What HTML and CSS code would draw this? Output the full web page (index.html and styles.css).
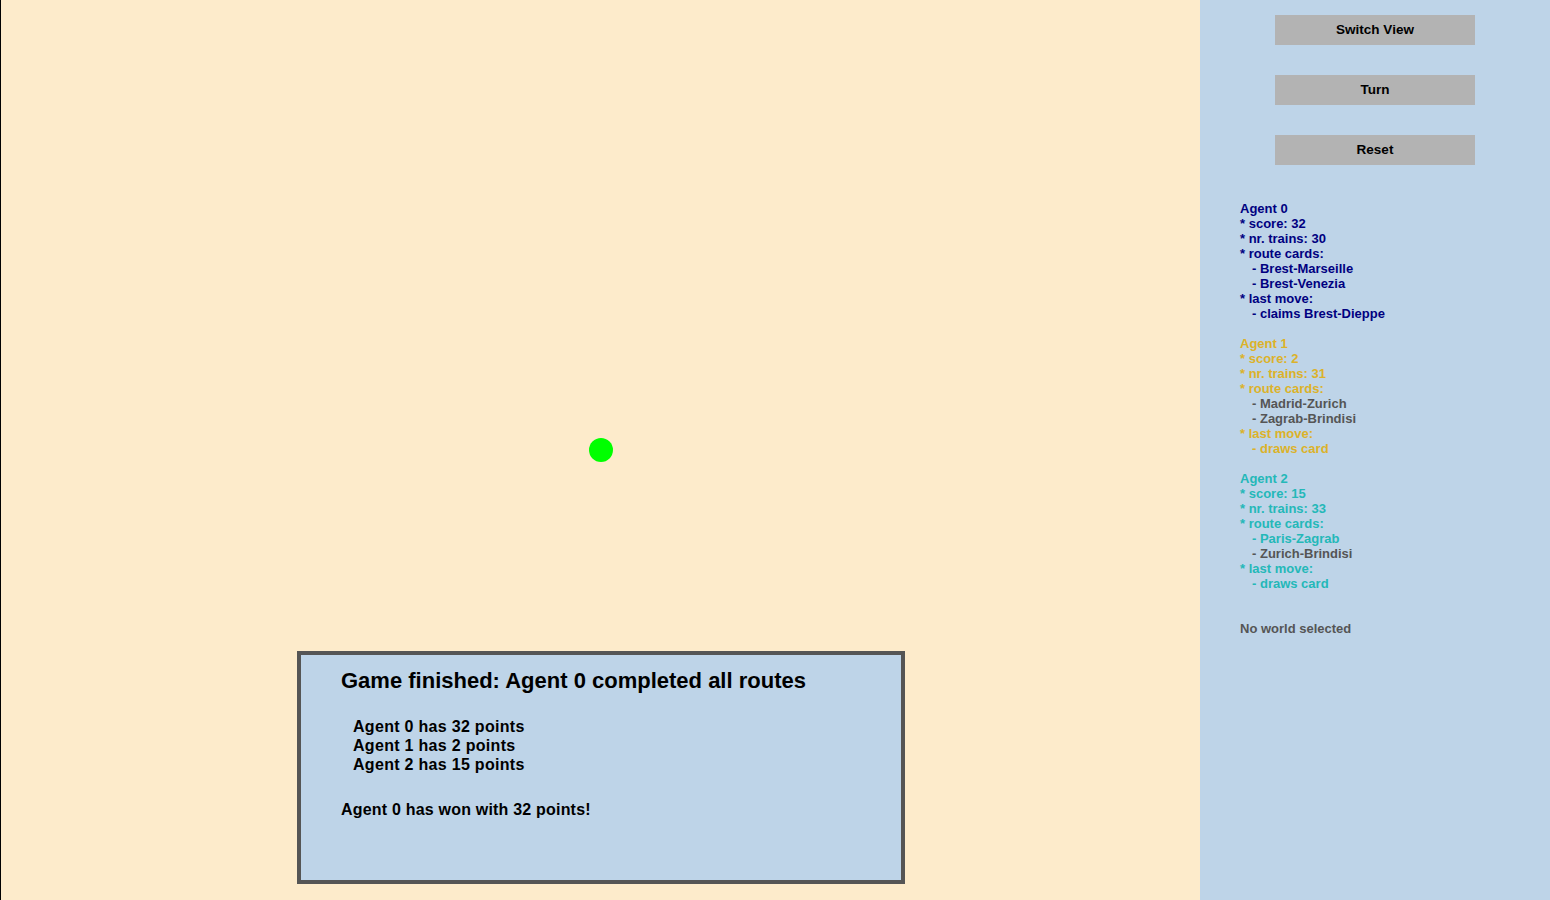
FILE: index.html
```html
<!DOCTYPE html>
<html>
<head>
<meta charset="utf-8">
<link rel="stylesheet" href="styles.css">
</head>
<body>
<div class="app">
  <div class="board">
    <div class="dot"></div>
    <div class="dialog">
      <div class="title">Game finished: Agent 0 completed all routes</div>
      <div class="scores">
        <div>Agent 0 has 32 points</div>
        <div>Agent 1 has 2 points</div>
        <div>Agent 2 has 15 points</div>
      </div>
      <div class="winner">Agent 0 has won with 32 points!</div>
    </div>
  </div>
  <div class="sidebar">
    <div class="buttons">
      <button class="btn">Switch View</button>
      <button class="btn">Turn</button>
      <button class="btn">Reset</button>
    </div>
    <div class="info">
      <div class="agent a0">
        <div>Agent 0</div>
        <div>* score: 32</div>
        <div>* nr. trains: 30</div>
        <div>* route cards:</div>
        <div class="sub">- Brest-Marseille</div>
        <div class="sub">- Brest-Venezia</div>
        <div>* last move:</div>
        <div class="sub">- claims Brest-Dieppe</div>
      </div>
      <div class="agent a1">
        <div>Agent 1</div>
        <div>* score: 2</div>
        <div>* nr. trains: 31</div>
        <div>* route cards:</div>
        <div class="sub gray">- Madrid-Zurich</div>
        <div class="sub gray">- Zagrab-Brindisi</div>
        <div>* last move:</div>
        <div class="sub">- draws card</div>
      </div>
      <div class="agent a2">
        <div>Agent 2</div>
        <div>* score: 15</div>
        <div>* nr. trains: 33</div>
        <div>* route cards:</div>
        <div class="sub">- Paris-Zagrab</div>
        <div class="sub gray">- Zurich-Brindisi</div>
        <div>* last move:</div>
        <div class="sub">- draws card</div>
      </div>
      <div class="world">No world selected</div>
    </div>
  </div>
</div>
</body>
</html>
```
FILE: styles.css
```css
html, body {
  margin: 0;
  padding: 0;
}
body {
  font-family: "Liberation Sans", Arial, sans-serif;
  font-weight: bold;
}
.app {
  display: flex;
  width: 1550px;
  height: 900px;
  overflow: hidden;
}
.board {
  position: relative;
  width: 1199px;
  height: 900px;
  background: #fdebcb;
  border-left: 1px solid #000;
  flex: none;
}
.dot {
  position: absolute;
  left: 588px;
  top: 438px;
  width: 24px;
  height: 24px;
  border-radius: 50%;
  background: #00ff00;
}
.dialog {
  position: absolute;
  left: 296px;
  top: 651px;
  border: 4px solid #555555;
  background: #bed4e8;
  padding: 14px 40px 0 40px;
  width: 520px;
  height: 211px;
  color: #000;
}
.title {
  font-size: 22px;
  line-height: 24px;
}
.scores {
  margin-top: 24px;
  padding-left: 12px;
  font-size: 16px;
  line-height: 19px;
  letter-spacing: 0.3px;
}
.winner {
  margin-top: 26px;
  font-size: 16px;
  line-height: 19px;
  letter-spacing: 0.2px;
}
.sidebar {
  width: 350px;
  height: 900px;
  background: #bed4e8;
  flex: none;
}
.buttons {
  display: flex;
  flex-direction: column;
  align-items: center;
  gap: 30px;
  padding-top: 15px;
}
.btn {
  width: 200px;
  height: 30px;
  border: none;
  background: #b3b3b3;
  font-family: "Liberation Sans", Arial, sans-serif;
  font-weight: bold;
  font-size: 13.5px;
  color: #000;
  padding: 0 0 2px 0;
}
.info {
  margin-top: 36px;
  padding-left: 40px;
  font-size: 13px;
  line-height: 15px;
}
.agent {
  margin-bottom: 15px;
}
.sub {
  padding-left: 12px;
}
.a0 { color: #000080; }
.a1 { color: #dcb22a; }
.a2 { color: #24b8b8; }
.gray { color: #555555; }
.world {
  margin-top: 30px;
  color: #555555;
}
```
